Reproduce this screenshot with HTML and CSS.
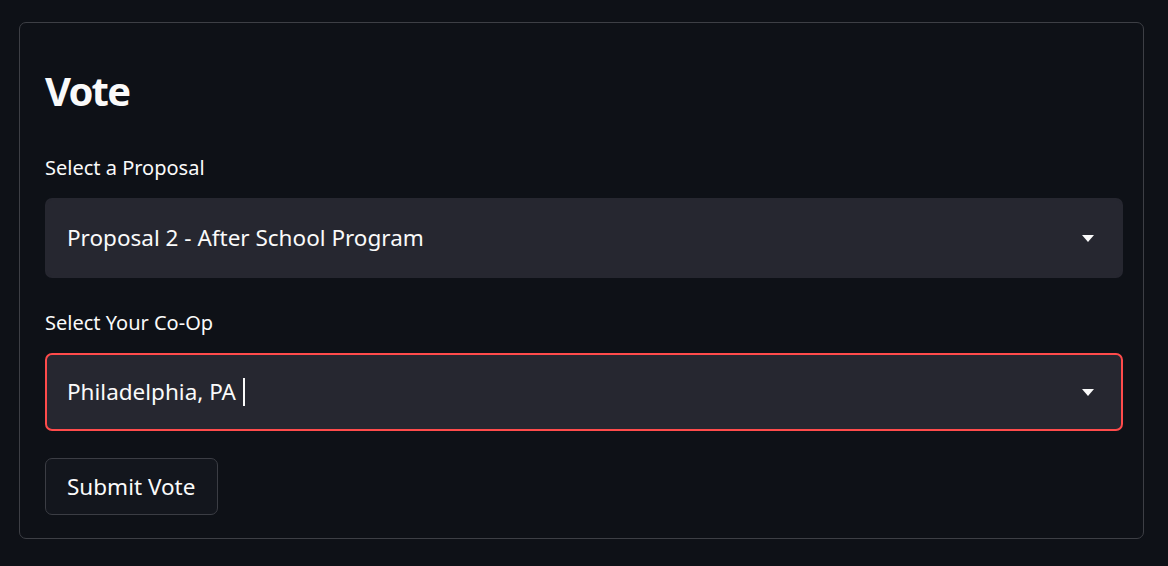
FILE: index.html
```html
<!DOCTYPE html>
<html lang="en">
<head>
<meta charset="utf-8">
<title>Vote</title>
<link rel="stylesheet" href="styles.css">
</head>
<body>
<form class="vote-form">
  <h1 class="title">Vote</h1>
  <div class="field field-first">
    <label class="field-label">Select a Proposal</label>
    <div class="select">
      <span class="select-value">Proposal 2 - After School Program</span>
      <svg class="caret" width="12" height="7" viewBox="0 0 12 7"><path d="M0 0H12L6 7Z" fill="#fafafa"/></svg>
    </div>
  </div>
  <div class="field field-second">
    <label class="field-label">Select Your Co-Op</label>
    <div class="select select-focused">
      <span class="select-value">Philadelphia, PA<span class="cursor"></span></span>
      <svg class="caret" width="12" height="7" viewBox="0 0 12 7"><path d="M0 0H12L6 7Z" fill="#fafafa"/></svg>
    </div>
  </div>
  <button type="button" class="submit">Submit Vote</button>
</form>
</body>
</html>
```
FILE: styles.css
```css
* { box-sizing: border-box; }
html, body { background: #0e1117; }
body {
  margin: 0;
  padding: 22px 24px 0 19px;
  font-family: "Noto Sans", "Liberation Sans", sans-serif;
  color: #fafafa;
}
.vote-form {
  border: 1px solid #3d3f45;
  border-radius: 7px;
  padding: 41px 20px 23px 25px;
  display: flex;
  flex-direction: column;
  align-items: flex-start;
}
.title {
  margin: 0;
  font-size: 40px;
  line-height: 53px;
  font-weight: 700;
  letter-spacing: -1.8px;
}
.field { width: 100%; display: flex; flex-direction: column; }
.field-first { margin-top: 37px; }
.field-second { margin-top: 31px; }
.field-label {
  font-size: 20px;
  line-height: 27px;
  margin-bottom: 17px;
}
.select {
  height: 80px;
  background: #262730;
  border-radius: 7px;
  border: 2px solid #262730;
  display: flex;
  align-items: center;
  justify-content: space-between;
  padding: 0 27px 0 20px;
}
.select-focused { border-color: #ff4b4b; height: 78px; }
.select-value {
  font-size: 22.5px;
  line-height: 30px;
  display: flex;
  align-items: center;
}
.cursor {
  display: inline-block;
  width: 1.5px;
  height: 28px;
  background: #fafafa;
  margin-left: 7px;
}
.caret { display: block; }
.submit {
  margin-top: 27px;
  height: 57px;
  padding: 0 22px 0 21px;
  background: #13161d;
  color: #fafafa;
  border: 1px solid #3b3d44;
  border-radius: 7px;
  font-family: inherit;
  font-size: 22.5px;
}
```
